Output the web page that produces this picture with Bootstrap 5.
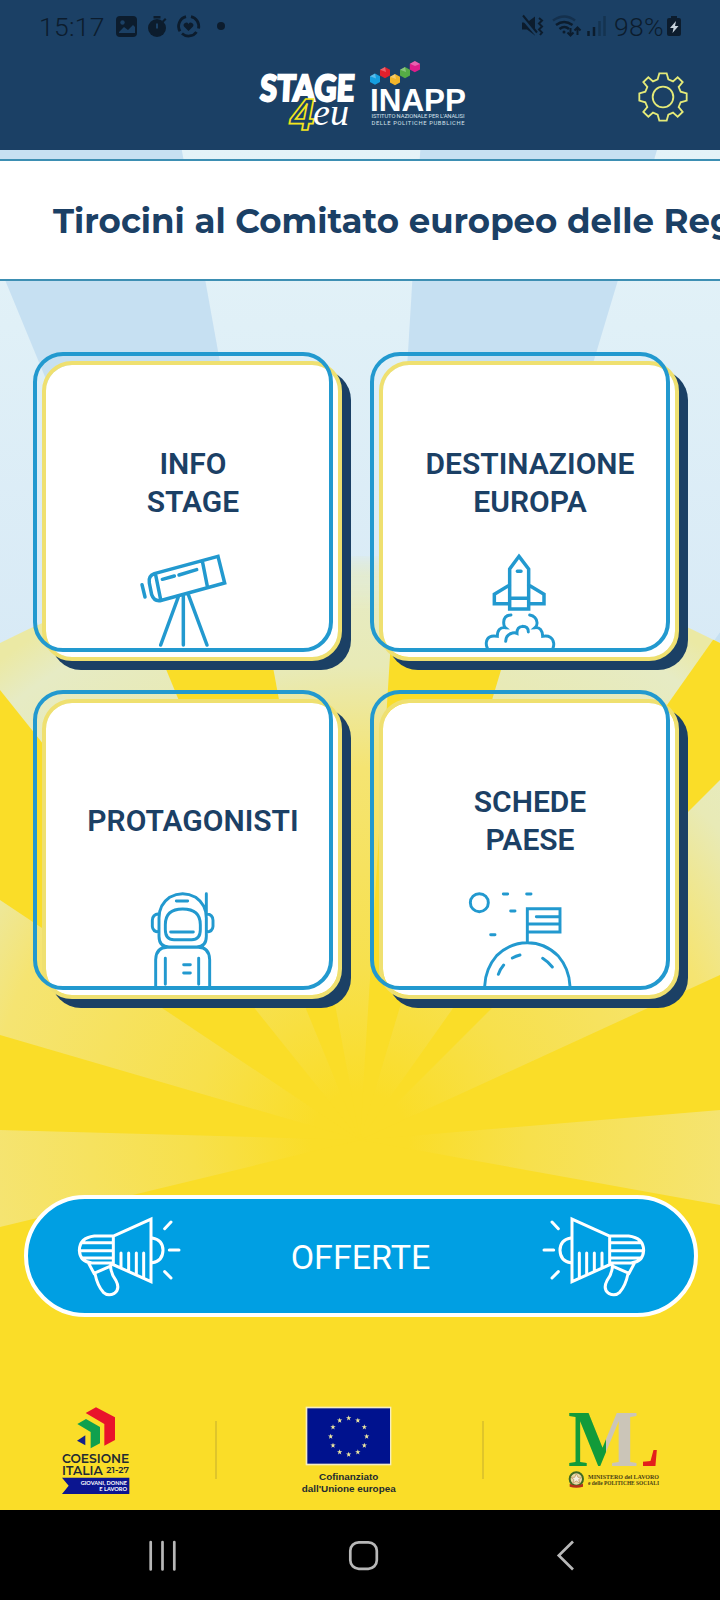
<!DOCTYPE html>
<html lang="it">
<head>
<meta charset="utf-8">
<meta name="viewport" content="width=device-width, initial-scale=1">
<title>Stage4eu</title>
<link href="https://cdn.jsdelivr.net/npm/bootstrap@5.3.0/dist/css/bootstrap.min.css" rel="stylesheet">
<style>
  :root { --navy:#1b4065; --sky:#2299cf; --ink:#0c1c2d; }
  body { margin:0; font-family:Roboto,"Liberation Sans",sans-serif; background:#fadd28; }
  .app { width:720px; height:1600px; isolation:isolate; }
  .rays { inset:0; z-index:-1; }
  .app-head { height:150px; background:var(--navy); }
  .status { height:52px; padding:0 38px 0 39px; color:var(--ink); font-size:26.5px; font-weight:300; line-height:52px; letter-spacing:.3px; }
  .status .clock-text, .status .power-text { position:static; padding-top:2px; }
  .brand { height:98px; padding-right:32px; }
  .ticker { height:122px; margin-top:9px; padding-left:53px; background:#fff; border-top:2px solid #3d8fb3; border-bottom:2px solid #3d8fb3;
    font:700 34px/120px Montserrat,"Open Sans",sans-serif; color:var(--navy); }
  .tiles { display:grid; grid-template-columns:300px 300px; gap:38px 37px; margin:80px 0 0 42px; }
  .tile { height:300px; padding:47px 0 9px; background:#fff; background-clip:padding-box; border:4px solid #efe070; border-radius:30px;
    box-shadow:9px 9px 0 #1b4065; color:var(--navy); font-weight:600; font-size:30px; line-height:38px; text-decoration:none; }
  .tile::before { content:""; position:absolute; left:-13px; top:-13px; width:300px; height:300px; border:4px solid var(--sky); border-radius:30px; }
  .tile span { padding-left:2px; }
  .tile svg { width:110px; height:95px; margin-right:18px; flex:none; }
  .ico { fill:none; stroke:var(--sky); stroke-width:10.500; stroke-linecap:round; stroke-linejoin:miter; }
  .ico .fine { stroke-width:8.800; }
  .offer { height:122px; margin:196px 22px 0 23.5px; padding:0 47.5px 0 49px; background:#009fe3; border:4px solid #fff; border-radius:61px; color:#fff; font-size:34px; }
  .offer span { padding:2px 2px 0 0; }
  .horn { width:104px; height:81.7px; fill:none; stroke:#fff; stroke-width:9; stroke-linecap:round; }
  .flip { transform:scaleX(-1); }
  .partners { height:90px; margin-top:88px; padding:0 60px 0 61px; }
  .sep { width:2px; height:58px; background:#dfc52b; margin-top:16px; }
  .sysnav { height:90px; background:#000; }
</style>
</head>
<body>
<div class="app position-relative overflow-hidden d-flex flex-column">

  <!-- sunburst backdrop -->
  <svg class="rays position-absolute" width="720" height="1600" viewBox="0 0 720 1600" aria-hidden="true">
    <defs>
      <linearGradient id="sky" x1="0" y1="150" x2="0" y2="650" gradientUnits="userSpaceOnUse">
        <stop offset="0" stop-color="#e5f3f8"/><stop offset=".35" stop-color="#e0f0f7"/><stop offset="1" stop-color="#d8eaf6"/>
      </linearGradient>
      <radialGradient id="pale" cx="360" cy="1140" r="600" gradientUnits="userSpaceOnUse">
        <stop offset=".08" stop-color="#fadd28"/><stop offset=".28" stop-color="#f7e04c"/><stop offset=".62" stop-color="#f5e472"/><stop offset=".79" stop-color="#e8eab6"/><stop offset=".93" stop-color="#e6ebc4"/><stop offset="1" stop-color="#ebe9a4"/>
      </radialGradient>
      <clipPath id="sun"><circle cx="360" cy="1344" r="788"/></clipPath>
      <linearGradient id="soft" x1="0" y1="552" x2="0" y2="650" gradientUnits="userSpaceOnUse">
        <stop offset="0" stop-color="#fff" stop-opacity="0"/><stop offset=".25" stop-color="#fff" stop-opacity=".7"/><stop offset=".6" stop-color="#fff"/>
      </linearGradient>
      <mask id="fade"><rect y="540" width="720" height="1060" fill="url(#soft)"/></mask>
    </defs>
    <rect width="720" height="1600" fill="url(#sky)"/>
    <g fill="#c6e0f2">
      <path d="M360 1140L-94 40L162 40Z"/><path d="M360 1140L427 40L690 40Z"/><path d="M360 1140L1140 40L1460 40Z"/>
    </g>
    <g mask="url(#fade)"><g clip-path="url(#sun)">
      <rect y="540" width="720" height="1060" fill="url(#pale)"/>
      <g fill="#fadd28">
        <path d="M360 1140L154 640L268 640Z"/><path d="M360 1140L391 640L510 640Z"/>
        <path d="M360 1140L720 630L720 780Z"/><path d="M360 1140L0 690L0 900Z"/>
        <path d="M360 1140L720 975L720 1110Z"/><path d="M360 1140L0 1035L0 1130Z"/>
        <path d="M360 1140L720 1205V1600H0V1227Z"/>
      </g>
    </g></g>
  </svg>

  <header class="app-head">
    <div class="status d-flex align-items-center">
      <span class="clock-text">15:17</span>
      <svg style="margin-left:7px" width="118" height="52" viewBox="112 0 118 52">
        <g fill="#0c1c2d"><rect x="116" y="16" width="21" height="21" rx="4"/><circle cx="157" cy="28" r="9"/><rect x="153.500" y="16" width="7" height="2.500"/><path d="M162 21l3-3 1.500 1.500-3 3z"/><circle cx="221" cy="26" r="4"/>
        <path d="M188.500 31l-4.500-4.500a2.500 2.500 0 014.500-2.500a2.500 2.500 0 014.500 2.500z"/></g>
        <path d="M119 32l5-5 4 3 5-5 2 2v6h-16z" fill="#1b4065"/><circle cx="122.500" cy="22.500" r="2.200" fill="#1b4065"/>
        <path d="M157 23.500v5" stroke="#1b4065" stroke-width="2"/>
        <path d="M186 16.700a9.800 9.800 0 00-6 14.500M182 33.500a9.800 9.800 0 0014.500-1.500M198.500 28.500a9.800 9.800 0 00-7.500-11.800" fill="none" stroke="#0c1c2d" stroke-width="2.800"/>
      </svg>
      <svg class="ms-auto" width="92" height="52" viewBox="517 0 92 52" fill="none" stroke="#0c1c2d" stroke-width="2.500">
        <path d="M521 22.500h5l8-6v19l-8-6h-5z" fill="#0c1c2d" stroke="none"/><path d="M521 17l15 17.500" stroke="#1b4065" stroke-width="4"/><path d="M522 15.500l14 17" stroke-width="2"/>
        <path d="M538 18l3 2.500-3 3 3 3-3 3 3 3-2 2.500" stroke-width="2"/>
        <path d="M552 20.500q11.500-8 22 0" stroke="#14304d"/><path d="M555 25q8-6 16.500 0M558.500 29q5-4 9.500 0"/><circle cx="563" cy="32" r="1.500" fill="#0c1c2d" stroke="none"/>
        <path d="M569.500 28v7.500m-3-3l3 3 3-3M576.500 35v-7.500m-3 3l3-3 3 3" stroke-width="2"/>
        <path d="M587.500 36v-5M593 36v-9"/><path d="M598.500 36V21M603.500 36V16" stroke="#153350"/>
      </svg>
      <span class="power-text" style="margin-left:4px">98%</span>
      <svg style="margin-left:2px" width="16" height="52" viewBox="666 0 16 52"><path d="M671 16h6v2h2q2 0 2 2v14q0 2-2 2h-10q-2 0-2-2v-14q0-2 2-2h2z" fill="#0c1c2d"/><path d="M676 21l-6 7h3.500l-1 5 6-7h-3.500z" fill="#c7d2dc"/></svg>
    </div>
    <div class="brand d-flex justify-content-end">
      <svg width="220" height="90" viewBox="254 52 220 90" style="margin-right:164px">
        <text transform="translate(259.500 101) skewX(-3)" font-family="Lato" font-weight="900" font-size="36" textLength="94" lengthAdjust="spacingAndGlyphs" fill="#fff" stroke="#fff" stroke-width="2.200">STAGE</text>
        <text x="290" y="130" font-family="Liberation Sans" font-style="italic" font-weight="700" font-size="44" fill="#1b4065" stroke="#f5e61c" stroke-width="1.700">4</text>
        <text x="313" y="125" font-family="Liberation Serif" font-style="italic" font-size="38" textLength="36" lengthAdjust="spacingAndGlyphs" fill="#fff">eu</text>
        <path fill="#159fe0" d="M375 73.500l5 2.800v5.600l-5 2.800-5-2.800v-5.600z"/><path fill="#e21f2b" d="M385 67l5 2.800v5.600l-5 2.800-5-2.800v-5.600z"/>
        <path fill="#f2b52a" d="M395 74l5 2.800v5.600l-5 2.800-5-2.800v-5.600z"/><path fill="#55ac45" d="M405 67l5 2.800v5.600l-5 2.800-5-2.800v-5.600z"/>
        <path fill="#dd1d8b" d="M414.800 61l5.200 2.800v5.600l-5.200 2.800-5-2.800v-5.600z"/>
        <path fill="#fff" opacity=".3" d="M370 76.300l5-2.800 1 5zM380 69.800l5-2.800 1 5zM390 76.800l5-2.800 1 5zM400 69.800l5-2.800 1 5zM410 63.800l5-2.800 5 3-5 2z"/>
        <text x="370" y="110.500" font-family="Liberation Sans" font-weight="700" font-size="32" textLength="96" lengthAdjust="spacingAndGlyphs" fill="#fff">INAPP</text>
        <text x="371.500" y="118.200" font-family="Roboto" font-size="5.800" textLength="93" fill="#d5e0ea">ISTITUTO NAZIONALE PER L'ANALISI</text>
        <text x="371.500" y="124.800" font-family="Roboto" font-size="5.800" textLength="93" fill="#d5e0ea">DELLE POLITICHE PUBBLICHE</text>
      </svg>
      <svg width="50" height="50" viewBox="-75 -75 150 150" style="margin-top:20px" fill="none" stroke="#e4ea78" stroke-width="5.500">
        <circle r="31"/>
        <path d="M-11-71H11L16-53L30-47L44-59L59-45L47-30L53-16L71-11V11L53 16L47 30L59 45L44 59L30 47L16 53L11 71H-11L-16 53L-30 47L-44 59L-59 45L-47 30L-53 16L-71 11V-11L-53-16L-47-30L-59-45L-44-59L-30-47L-16-53Z"/>
      </svg>
    </div>
  </header>

  <div class="ticker text-nowrap overflow-hidden flex-shrink-0">Tirocini al Comitato europeo delle Regioni</div>

  <main class="tiles">
    <a class="tile position-relative d-flex flex-column align-items-center text-center" href="#">
      <span class="flex-grow-1 d-flex align-items-center">INFO<br>STAGE</span>
      <svg class="ico" viewBox="324 640 330 285"><path d="M403 702L594 650L614 730L420 783Q402 785 395 765L388 730Q384 709 403 702ZM547 664L562 740M407 706L422 780M427 719L463 709M477 706L530 690M366 735L375 772M476 769L422 916M490 764V916M505 765L561 916"/></svg>
    </a>
    <a class="tile position-relative d-flex flex-column align-items-center text-center" href="#">
      <span class="flex-grow-1 d-flex align-items-center">DESTINAZIONE<br>EUROPA</span>
      <svg class="ico" viewBox="315 640 330 285"><path d="M477 650L506 688V808H449V688ZM449 776H506M449 736L403 764V792H449M506 736L552 764V792H506M472 695H483"/><path class="fine" d="M453 826Q432 827 431 848Q431 860 436 864Q412 862 412 890Q382 885 379 908Q378 918 382 925M509 826Q529 830 531 848Q532 858 525 864Q547 862 548 890Q577 885 581 910Q582 918 579 925M437 905Q438 884 457 880Q465 878 471 881Q470 862 487 860Q505 860 505 877"/></svg>
    </a>
    <a class="tile position-relative d-flex flex-column align-items-center text-center" href="#">
      <span class="flex-grow-1 d-flex align-items-center">PROTAGONISTI</span>
      <svg class="ico" viewBox="324 634 330 285"><path class="fine" d="M417 715Q417 675 449 653Q488 632 527 653Q559 675 559 715V770Q559 802 530 802H447Q417 802 417 770ZM436 750V735Q436 688 488 688Q541 688 541 735V750Q541 780 515 780H462Q436 780 436 750ZM452 757H520M469 664H503M559 642V700M417 702Q397 704 397 722V740Q398 756 417 757M559 702Q579 704 579 722V740Q578 756 559 757M407 925V840Q408 803 442 803H535Q568 803 569 840V925M436 836V914M536 836V914M491 855H511M491 880H511"/></svg>
    </a>
    <a class="tile position-relative d-flex flex-column align-items-center text-center" href="#">
      <span class="flex-grow-1 d-flex align-items-center">SCHEDE<br>PAESE</span>
      <svg class="ico" viewBox="315 634 330 285"><g class="fine"><circle cx="358" cy="669" r="27"/><path d="M374 925Q374 870 410 828Q450 789 502 789Q555 789 594 828Q630 870 630 925M502 788V687H600V757H502M502 733H600M529 711H600M430 643H443M500 643H513M452 694H465M392 765H405M415 884Q419 870 431 856M457 835Q468 829 480 826M548 836Q564 846 577 862"/></g></svg>
    </a>
  </main>

  <a class="offer d-flex align-items-center justify-content-between text-decoration-none flex-shrink-0" href="#">
    <svg class="horn" viewBox="230 105 312 245"><path id="horn" d="M339 168L452 117V305L339 254ZM339 168H282Q238 173 237 211Q239 246 275 249H339M246 188H336M239 212H336M246 234H336M362 219V262M385 219V272M408 219V282M430 219V292M456 174Q488 180 488 211Q487 243 456 248M493 146L512 126M507 210H536M493 275L512 294M265 250L281 280L327 260M284 281Q291 316 309 337Q323 350 342 340Q360 327 347 302Q330 278 331 256"/></svg>
    <span>OFFERTE</span>
    <svg class="horn flip" viewBox="230 105 312 245"><use href="#horn"/></svg>
  </a>

  <footer class="partners d-flex justify-content-between flex-shrink-0">
    <svg width="70" height="90" viewBox="185 75 210 270">
      <path fill="#e9132b" d="M290 82L347 112V180L315 197V132L259 99Z"/><path fill="#10a04e" d="M260 117L302 141V190L274 205V156L234 132Z"/><path fill="#14208a" d="M233 182L258 166V196Z"/>
      <g font-family="Montserrat,Lato" font-weight="600" fill="#222a35"><text x="188" y="248" font-size="36" textLength="202" lengthAdjust="spacingAndGlyphs">COESIONE</text><text x="188" y="284" font-size="36" textLength="122" lengthAdjust="spacingAndGlyphs">ITALIA</text><text x="321" y="278" font-size="26" textLength="68" lengthAdjust="spacingAndGlyphs">21-27</text></g>
      <path fill="#0b1590" d="M188 293H390V342H188L208 317Z"/>
      <g font-family="Lato" font-weight="700" font-size="18" fill="#fff" text-anchor="end"><text x="383" y="316" textLength="139" lengthAdjust="spacingAndGlyphs">GIOVANI, DONNE</text><text x="383" y="334" textLength="83" lengthAdjust="spacingAndGlyphs">E LAVORO</text></g>
    </svg>
    <span class="sep"></span>
    <svg width="98" height="90" viewBox="903 75 294 270" fill="#eee8a0">
      <rect x="917" y="80" width="257" height="176" fill="#f5edc0"/><rect x="922" y="85" width="248" height="166" fill="#00128e"/>
      <defs><path id="star" d="M0-8L2-2.500H8L3 1.500L5 7.500L0 4L-5 7.500L-3 1.500L-8-2.500H-2Z"/></defs>
      <use href="#star" x="1046" y="114"/><use href="#star" x="1073.500" y="121"/><use href="#star" x="1093" y="141"/><use href="#star" x="1100" y="169"/><use href="#star" x="1093" y="196"/><use href="#star" x="1073.500" y="216"/><use href="#star" x="1046" y="223"/><use href="#star" x="1019" y="216"/><use href="#star" x="999" y="196"/><use href="#star" x="992" y="169"/><use href="#star" x="999" y="141"/><use href="#star" x="1019" y="121"/>
      <g font-family="Liberation Sans" font-weight="700" font-size="29" fill="#232b30"><text x="957" y="299" textLength="178" lengthAdjust="spacingAndGlyphs">Cofinanziato</text><text x="905" y="335" textLength="282" lengthAdjust="spacingAndGlyphs">dall'Unione europea</text></g>
    </svg>
    <span class="sep"></span>
    <svg width="92" height="90" viewBox="504 75 276 270">
      <defs>
        <linearGradient id="gm" x1="505" x2="720" y1="0" y2="0" gradientUnits="userSpaceOnUse"><stop offset=".52" stop-color="#119b3a"/><stop offset=".52" stop-color="#cbc5b8"/></linearGradient>
        <linearGradient id="gl" x1="640" x2="790" y1="0" y2="0" gradientUnits="userSpaceOnUse"><stop offset=".6" stop-color="#cbc5b8" stop-opacity="0"/><stop offset=".6" stop-color="#e3201b"/></linearGradient>
      </defs>
      <g font-family="Liberation Serif" font-weight="700" font-size="242"><text x="504" y="257" textLength="212" lengthAdjust="spacingAndGlyphs" fill="url(#gm)">M</text><text x="630" y="257" textLength="150" lengthAdjust="spacingAndGlyphs" fill="url(#gl)">L</text></g>
      <circle cx="529" cy="297" r="20" fill="#e8d8a8" stroke="#3f6b24" stroke-width="6"/><path d="M529 281l5 11h11l-9 7 4 11-11-7-11 7 4-11-9-7h11z" fill="#f4eee0" stroke="#b98b52" stroke-width="2"/><path d="M509 311q20 10 40 0v9q-20 6-40 0z" fill="#b5301c"/>
      <g font-family="Liberation Serif" font-weight="700" font-size="20" fill="#4a3f15"><text x="564" y="296" textLength="213" lengthAdjust="spacingAndGlyphs">MINISTERO del LAVORO</text><text x="564" y="316" textLength="213" lengthAdjust="spacingAndGlyphs">e delle POLITICHE SOCIALI</text></g>
    </svg>
  </footer>

  <nav class="sysnav mt-auto flex-shrink-0">
    <svg width="720" height="90" viewBox="0 1510 720 90" fill="none" stroke="#b8b8b8" stroke-width="2.700">
      <path d="M150.700 1542V1569.500M162.500 1542V1569.500M174.300 1542V1569.500" stroke-linecap="round"/><rect x="350.300" y="1542.300" width="26.500" height="26.500" rx="8.500"/><path d="M573 1541.500L558.800 1555.500L573 1569.500"/>
    </svg>
  </nav>
</div>
<script src="https://cdn.jsdelivr.net/npm/bootstrap@5.3.0/dist/js/bootstrap.bundle.min.js"></script>
</body>
</html>
